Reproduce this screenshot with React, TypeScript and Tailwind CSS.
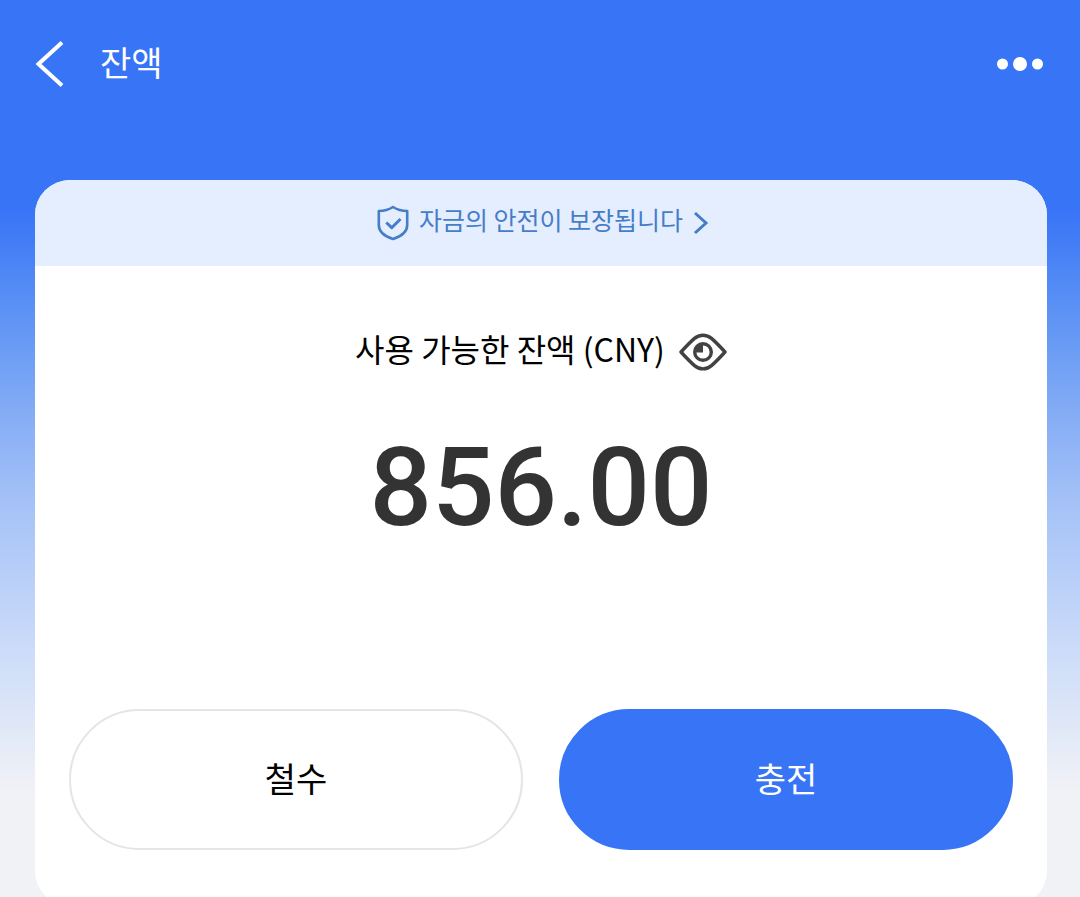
import type { ReactNode } from "react";

function BackIcon() {
  return (
    <svg width="30" height="48" viewBox="0 0 30 48" fill="none" stroke="currentColor" strokeWidth="4">
      <path d="M26 2.5 2.5 24 26 45.5" />
    </svg>
  );
}

function MoreIcon() {
  return (
    <svg width="48" height="16" viewBox="0 0 48 16" fill="currentColor">
      <circle cx="6.5" cy="8" r="5.5" />
      <circle cx="24" cy="8" r="7" />
      <circle cx="41.5" cy="8" r="5.5" />
    </svg>
  );
}

function ShieldIcon() {
  return (
    <svg
      width="32"
      height="36"
      viewBox="0 0 32 36"
      fill="none"
      stroke="currentColor"
      strokeWidth="2.6"
      strokeLinejoin="round"
    >
      <path d="M16 2C12 4.600 7 6 1.800 6V20C1.800 27 8 31.500 16 34 24 31.500 30.200 27 30.200 20V6C25 6 20 4.600 16 2Z" />
      <path d="m9.300 17.500 5.400 5.200 8.800-8.700" strokeWidth="3" />
    </svg>
  );
}

function ChevronIcon() {
  return (
    <svg width="16" height="24" viewBox="0 0 16 24" fill="none" stroke="currentColor" strokeWidth="3">
      <path d="m2 2 11 10L2 22" />
    </svg>
  );
}

function EyeIcon() {
  return (
    <svg width="48" height="38" viewBox="0 0 48 38" fill="none" stroke="currentColor" strokeLinejoin="round">
      <path
        d="M2 19C7 13.5 11 9.3 15.5 5.4 20.5 1.1 27.5 1.1 32.5 5.4 37 9.3 41 13.5 46 19 41 24.5 37 28.7 32.5 32.6 27.5 36.900 20.500 36.900 15.500 32.600 11 28.700 7 24.500 2 19Z"
        strokeWidth="3.4"
      />
      <circle cx="24" cy="19" r="8.3" strokeWidth="3.4" />
      <path d="M24 11v8.500h-8a8 8 0 0 1 8-8.500Z" fill="currentColor" stroke="none" />
    </svg>
  );
}

function ActionButton({ children, primary = false }: { children: ReactNode; primary?: boolean }) {
  return (
    <button
      type="button"
      className={`h-[141px] flex-1 rounded-full border-2 pb-1 text-[34px] ${
        primary ? "border-[#3874f6] bg-[#3874f6] text-white" : "border-[#e5e5e5] bg-white text-black"
      }`}
    >
      {children}
    </button>
  );
}

export default function App() {
  return (
    <div className="h-screen overflow-hidden bg-[#f1f2f6] bg-[linear-gradient(180deg,#3874f6_0px,#3874f6_210px,#5c92f5_310px,#7fa9f5_400px,#a4c1f7_500px,#c9daf9_640px,#f1f2f6_792px)] font-['Noto_Sans_CJK_KR',sans-serif]">
      <header className="flex h-32 items-center justify-between px-9 text-white">
        <div className="flex items-center gap-[34px]">
          <button type="button" aria-label="뒤로">
            <BackIcon />
          </button>
          <h1 className="pb-1 text-[34px] leading-none">잔액</h1>
        </div>
        <button type="button" aria-label="더보기">
          <MoreIcon />
        </button>
      </header>

      <main className="mt-[52px] pr-[33px] pl-[35px]">
        <section className="overflow-hidden rounded-[35px] bg-white pb-14">
          <a
            href="#safety"
            className="flex h-[86px] items-center justify-center gap-2.5 bg-[#e5eeff] pl-1 text-[25px] leading-none text-[#457dc9]"
          >
            <ShieldIcon />
            <span className="pb-2">자금의 안전이 보장됩니다</span>
            <ChevronIcon />
          </a>

          <div className="mt-16 flex items-center justify-center gap-3.5">
            <h2 className="pb-2 text-[32px] leading-9 text-black">사용 가능한 잔액 (CNY)</h2>
            <button type="button" aria-label="잔액 숨기기" className="text-[#424242]">
              <EyeIcon />
            </button>
          </div>

          <p className="mt-14 text-center font-['Roboto',sans-serif] text-[110px] leading-[116px] font-medium text-[#333333]">
            856.00
          </p>

          <div className="mt-[163px] flex gap-9 px-[34px]">
            <ActionButton>철수</ActionButton>
            <ActionButton primary>충전</ActionButton>
          </div>
        </section>
      </main>
    </div>
  );
}
